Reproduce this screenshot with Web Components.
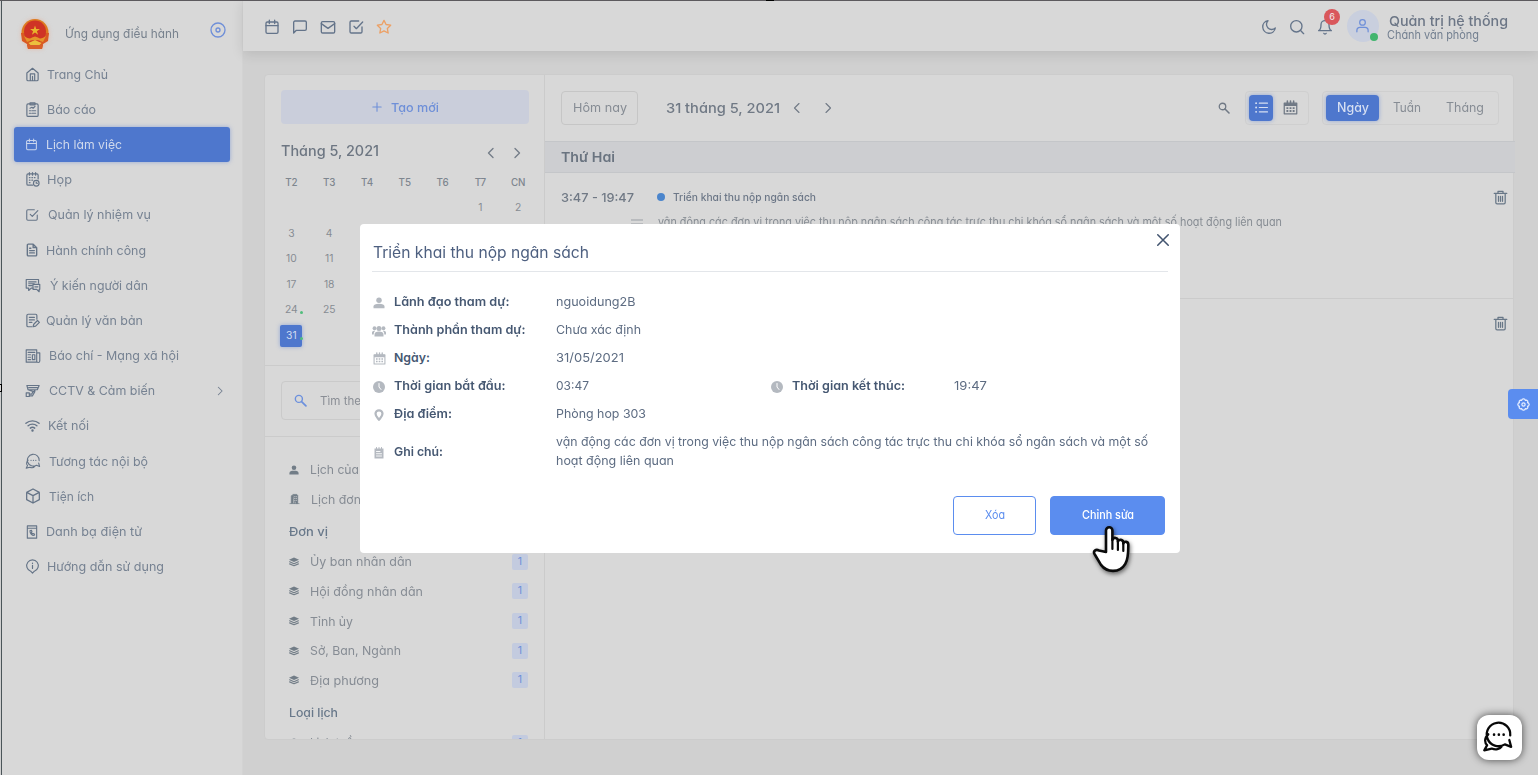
<!DOCTYPE html>
<html lang="vi">
<head>
<meta charset="utf-8">
<title>Lịch làm việc</title>
<style>
  html, body { margin: 0; height: 100%; overflow: hidden; }
  body { font-family: Inter, "Noto Sans", sans-serif; font-feature-settings: "cv11"; font-size: 13px; line-height: 1; color: #7b8592; background: #d0d0d0; }
  app-shell { height: 775px; }
</style>
</head>
<body>
<app-shell></app-shell>
<script>
const ICONS = {
  calendar: ['0 0 24 24', '<rect x="3" y="4.5" width="18" height="17" rx="2"/><path d="M3 10h18M8 1.8v5M16 1.8v5"/>'],
  chat: ['0 0 24 24', '<path d="M2.500 21V5a2 2 0 0 1 2-2h15a2 2 0 0 1 2 2v10a2 2 0 0 1-2 2h-13z"/>'],
  mail: ['0 0 24 24', '<rect x="2" y="4" width="20" height="17" rx="2"/><path d="M2 7l10 7 10-7"/>'],
  check: ['0 0 24 24', '<path d="M9 11l3.500 3.500L22 4.500"/><path d="M21 12v7a2 2 0 0 1-2 2H5a2 2 0 0 1-2-2V5a2 2 0 0 1 2-2h11"/>'],
  star: ['0 0 24 24', '<path d="M12 2l3.100 6.300 6.900 1-5 4.900 1.200 6.800L12 17.800 5.800 21 7 14.200 2 9.300l6.900-1z"/>'],
  moon: ['0 0 24 24', '<path d="M21.500 13.500A9.500 9.500 0 1 1 10.500 2.500a7.500 7.500 0 0 0 11 11z"/>'],
  search: ['0 0 24 24', '<circle cx="11" cy="11" r="8.500"/><path d="M22 22l-5-5"/>'],
  find: ['0 0 24 24', '<circle cx="9" cy="9" r="6.500" stroke-width="2.600"/><path d="M22 22l-8-8" stroke-width="3.200"/>'],
  bell: ['0 0 24 24', '<path d="M18 8.500a6 6 0 0 0-12 0c0 7-3.500 9-3.500 9h19S18 15.500 18 8.500M13.800 21.500a2 2 0 0 1-3.600 0"/>'],
  user: ['0 0 24 24', '<circle cx="12" cy="7" r="4.500"/><path d="M3 22v-2a5 5 0 0 1 5-5h8a5 5 0 0 1 5 5v2"/>'],
  left: ['0 0 24 24', '<path d="M16 3l-9 9 9 9"/>'],
  right: ['0 0 24 24', '<path d="M8 3l9 9-9 9"/>'],
  plus: ['0 0 24 24', '<path d="M12 2v20M2 12h20"/>'],
  close: ['0 0 24 24', '<path d="M3 3l18 18M21 3L3 21"/>'],
  target: ['0 0 24 24', '<circle cx="12" cy="12" r="10.500"/><circle cx="12" cy="12" r="3"/>'],
  home: ['0 0 24 24', '<path d="M3 9.500L12 2l9 7.500V20a2 2 0 0 1-2 2H5a2 2 0 0 1-2-2zM8.500 22V11h7v11M12 22v-7"/>'],
  report: ['0 0 24 24', '<rect x="3" y="3" width="18" height="20" rx="2"/><path d="M8 1.500h8v3H8zM8 10l3-1.500 2 1.500 3-3M7 14h2M11 14h6M7 18h2M11 18h6"/>'],
  meeting: ['0 0 24 24', '<path d="M12 21H5a2 2 0 0 1-2-2V5a2 2 0 0 1 2-2h14a2 2 0 0 1 2 2v6M7 1v4M12 1v4M17 1v4M7 9h1M11 9h1M15 9h1M7 13h1M11 13h1M7 17h1"/><circle cx="18" cy="18" r="4.500"/><path d="M18 16v2h2"/>'],
  file: ['0 0 24 24', '<path d="M4 3.500A1.500 1.500 0 0 1 5.500 2H14l6 6v12.500a1.500 1.500 0 0 1-1.500 1.500h-13A1.500 1.500 0 0 1 4 20.500zM14 2v6h6M8 9h2M8 13h8M8 17h8" stroke-width="2.400"/>'],
  comments: ['0 0 26 24', '<path d="M22 9V3H2v14h4v4l4-4h3M6 7h12M6 10h9M6 13h6"/><path d="M13 11h11v8h-1v4l-4-4h-6zM16 15h5"/>'],
  edit: ['0 0 24 24', '<path d="M11 22H5a2 2 0 0 1-2-2V4a2 2 0 0 1 2-2h12a2 2 0 0 1 2 2v6M7 7h8M7 11h8M7 15h4"/><path d="M13 22l1-4 6-6 3 3-6 6z"/>'],
  news: ['0 0 26 24', '<path d="M2 2h17v20H2zM19 7h5v13a2 2 0 0 1-5 0M5 6h11M5 10h4M5 14h4M5 18h4M12 10h4v8h-4z"/>'],
  cctv: ['0 0 26 24', '<path d="M3 3h20l-3 7H5zM6 6.500h14M5 10l9 3 3-3M13 13l-2 4H7M2 15h5v6H2zM7 20h5l4-7"/>'],
  wifi: ['0 0 24 24', '<path d="M1.500 8.500a16 16 0 0 1 21 0M5 12.500a10.500 10.500 0 0 1 14 0M8.500 16.200a5.500 5.500 0 0 1 7 0" stroke-width="2.300"/><circle cx="12" cy="20" r="1" fill="currentColor"/>'],
  talk: ['0 0 28 28', '<path d="M24.700 13.500A10.300 10.300 0 1 0 20 21.300l5.500 2.200-1.600-6M5.500 12.500C1.500 16 2.500 20.500 4.500 22L2 26.500l6.500-1.500c3.500 1.500 7 .500 8.500-1.500"/><path d="M10.500 12.800h.1M14.700 12.800h.1M18.900 12.800h.1" stroke-width="2.200"/>'],
  cube: ['0 0 24 24', '<path d="M12 1.500l9.500 5v11l-9.500 5-9.500-5v-11zM2.500 6.500l9.500 5 9.500-5M12 11.500v11"/>'],
  phonebook: ['0 0 24 24', '<path d="M4 1.500h16v21H4zM4 5.500h16M8.500 10c0 4 3 8 7 8l1-2-2.500-1.500-1 .7c-1-.7-1.800-1.800-2-3l1-.8-1-2.400z"/>'],
  guide: ['0 0 24 24', '<path d="M12 22.500l-3-3a9.300 9.300 0 1 1 6 0zM12 10v5M12 6.500v.5"/>'],
  trash: ['0 0 24 24', '<path d="M2 5.500h20M8 5V2h8v3M4.500 5.500v14.500A2 2 0 0 0 6.500 22h11a2 2 0 0 0 2-2V5.500M8.800 10v8M12 10v8M15.200 10v8"/>'],
  list: ['0 0 24 24', '<path d="M8 4h15M8 12h15M8 20h15" stroke-width="2.200"/><path d="M2 4h.1M2 12h.1M2 20h.1" stroke-width="3.500"/>'],
  month: ['0 0 24 24', '<path d="M2 5h20v17H2zM2 8.500h20" stroke-width="2"/><path d="M3 6.500h18" stroke-width="3"/><path d="M7 1.500v4M12 1.500v4M17 1.500v4" stroke-width="2.500"/><path d="M5.500 13h3M10.500 13h3M15.500 13h3M5.500 17.500h3M10.500 17.500h3M15.500 17.500h3" stroke-width="3" stroke-linecap="butt"/>'],
  gear: ['0 0 24 24', '<path d="M9.500 2.500l2.500-1 2.500 1 1 2 2.500-.5 2 2-.5 2.500 2 1 1 2.500-1 2.500-2 1 .5 2.500-2 2-2.500-.5-1 2-2.500 1-2.500-1-1-2-2.500.5-2-2 .5-2.500-2-1-1-2.500 1-2.500 2-1L4 6l2-2 2.500.5z"/><circle cx="12" cy="12" r="3"/>'],
  grip: ['0 0 24 24', '<path d="M0 8h24M0 16h24" stroke-width="2"/>'],
  person: ['0 0 24 24', '<g fill="currentColor" stroke="none"><circle cx="12" cy="6.500" r="5.500"/><path d="M1 22.500V19c0-4 4-5.500 11-5.500S23 15 23 19v3.500z"/></g>'],
  people: ['0 0 28 24', '<g fill="currentColor" stroke="none"><circle cx="14" cy="7" r="5"/><circle cx="5" cy="6.500" r="3.800"/><circle cx="23" cy="6.500" r="3.800"/><path d="M5 23v-4c0-4 3-6 9-6s9 2 9 6v4zM0 19v-4c0-2.500 2-3.500 6.500-3.500-2 2-3 4-3 7.500zM28 19v-4c0-2.500-2-3.500-6.500-3.500 2 2 3 4 3 7.500z"/></g>'],
  clock: ['0 0 24 24', '<circle cx="12" cy="12" r="12" fill="currentColor" stroke="none"/><path d="M12 5v7l4 5" stroke="#fff" stroke-width="2"/>'],
  pin: ['0 0 24 24', '<path d="M12 21.500c-2-3-7-7-7-12a7 7 0 0 1 14 0c0 5-5 9-7 12z" stroke-width="4.500"/>'],
  note: ['0 0 24 24', '<path d="M3 3h18v20H3z" fill="currentColor" stroke="none"/><path d="M7 1v3M12 1v3M17 1v3" stroke-width="2"/><path d="M7 9h7M7 13.500h10M7 18h10" stroke="#fff" stroke-width="1.800"/>'],
  building: ['0 0 24 24', '<path d="M5 22V5l4-2v19M9 2h8l2 2v18h-4v-4h-3v4M2 22h20" fill="currentColor" stroke-width="1.500"/><path d="M12 7h1M15.500 7h1M12 11h1M15.500 11h1M12 15h1M15.500 15h1" stroke="#d8d8d8" stroke-width="1.500"/>'],
  layers: ['0 0 24 24', '<path d="M12 1L0 6.500l12 5.500 12-5.500z" fill="currentColor" stroke="none"/><path d="M1.500 11.500l10.500 4.500 10.500-4.500M1.500 16.500l10.500 4.500 10.500-4.500" stroke-width="2.800"/>'],
  hand: ['0 0 38 48', '<path d="M14 27V5.500a3.200 3.200 0 0 1 6.400 0V15a2.800 2.800 0 0 1 5.500.8v.8a2.800 2.800 0 0 1 5.400.8v1a2.600 2.600 0 0 1 5 1c0 8 .2 14-3 19.500-2.300 4-5.800 7-12.300 7-6 0-9-2-12-6L2.800 29.500C.500 26 4 24 7 25.500z" fill="#fff" stroke="#0b0b0b" stroke-width="2.600"/><path d="M20.400 14v10M25.900 16v9M31.300 18v8" stroke="#0b0b0b" stroke-width="2.200"/>'],
  emblem: ['0 0 30 30', '<g stroke="none"><circle cx="15" cy="13.500" r="13.500" fill="#dd7a1f"/><path d="M1 14l28 0-1 8-5 3-1 5H8l-1-5-5-3z" fill="#d95a22"/><circle cx="15" cy="12.500" r="11" fill="#cf3325"/><path d="M15 6.500l1.200 3.500h3.700l-3 2.200 1.200 3.500-3.100-2.200-3.100 2.200 1.200-3.500-3-2.200h3.700z" fill="#e8b52c"/><path d="M4 17q5 4 8 1.500l3-1 3 1q3 2.500 8-1.500l-3 6q-8-4-16 0z" fill="#e4952a"/><path d="M8.500 24l6.500-3 6.500 3-2 2h-9z" fill="#ecc03d"/><path d="M7 26h16l-1 4H8z" fill="#d9602a"/></g>'],
};

class UiIcon extends HTMLElement {
  connectedCallback() {
    if (this.shadowRoot) return;
    const [box, body] = ICONS[this.getAttribute('name')];
    const w = this.getAttribute('size') || 16, h = this.getAttribute('h') || w;
    this.attachShadow({ mode: 'open' }).innerHTML = `
      <style>:host{display:inline-block;flex:none;width:${w}px;height:${h}px}svg{display:block;width:100%;height:100%}</style>
      <svg viewBox="${box}" fill="none" stroke="currentColor" stroke-width="${this.getAttribute('sw') || 2}" stroke-linecap="round" stroke-linejoin="round">${body}</svg>`;
  }
}
customElements.define('ui-icon', UiIcon);

class FitText extends HTMLElement {
  connectedCallback() {
    if (this.shadowRoot) return;
    this.attachShadow({ mode: 'open' }).innerHTML = `
      <style>:host{display:inline-block;flex:none;white-space:nowrap;line-height:20px}span{display:inline-block;font-size:.95em;transform-origin:0 50%}</style><span><slot></slot></span>`;
    const w = +this.getAttribute('w');
    if (!w) return;
    const span = this.shadowRoot.querySelector('span');
    span.style.transform = `scaleX(${(w / span.getBoundingClientRect().width).toFixed(4)})`;
    this.style.width = w + 'px';
  }
}
customElements.define('fit-text', FitText);

const define = (name, html) => customElements.define(name, class extends HTMLElement {
  connectedCallback() {
    if (!this.shadowRoot) this.attachShadow({ mode: 'open' }).innerHTML = typeof html === 'function' ? html(this) : html;
  }
});

const NAV = [
  ['home', 'Trang Chủ', 22, 61, 15], ['report', 'Báo cáo', 22, 49, 15], ['calendar', 'Lịch làm việc', 21, 76, 13],
  ['meeting', 'Họp', 22, 25, 15], ['check', 'Quản lý nhiệm vụ', 23, 103, 14], ['file', 'Hành chính công', 21, 100, 14],
  ['comments', 'Ý kiến người dân', 25, 98, 16], ['edit', 'Quản lý văn bản', 21, 97, 15], ['news', 'Báo chí - Mạng xã hội', 24, 130, 16],
  ['cctv', 'CCTV & Cảm biến', 24, 106, 16], ['wifi', 'Kết nối', 23, 41, 15], ['talk', 'Tương tác nội bộ', 24, 99, 16],
  ['cube', 'Tiện ích', 24, 45, 16], ['phonebook', 'Danh bạ điện tử', 21, 96, 14], ['guide', 'Hướng dẫn sử dụng', 22, 117, 15]];

define('side-nav', () => `<style>
  :host{display:block;width:240px;flex:none;background:#d8d8d8;margin-left:1px;border-left:1px solid #4b5559;color:#768292;box-sizing:content-box}
  header{display:flex;align-items:center;height:56.500px;padding:0 16px 0 18px}
  header fit-text{font-size:13px;margin:11px 0 0 15px;color:#77818d}
  header ui-icon[name=emblem]{margin-top:12px;filter:drop-shadow(0 0 2px #e8a08088)}
  header ui-icon[name=target]{color:#6f8fd8;margin:4px 0 0 auto}
  .row{display:flex;align-items:center;height:35.200px;margin:0 12px 0 12px;padding-left:11px;border-radius:3px;box-sizing:border-box;font-size:13px}
  .row>span{display:flex;flex:none;color:#657487}
  .row>ui-icon{margin:0 5px 0 auto}
  .on{background:#4e77cd;color:#d0d9ec;box-shadow:0 0 4px #7391d6aa}
  .on>span{color:#cad5ee}
</style>
<header><ui-icon name="emblem" size="30"></ui-icon><fit-text w="114">Ứng dụng điều hành</fit-text><ui-icon name="target" size="16"></ui-icon></header>
<nav>${NAV.map(([i, t, g, w, s]) => `<div class="row${i === 'calendar' ? ' on' : ''}"><span style="width:${g}px"><ui-icon name="${i}" size="${s}" sw="1.900"></ui-icon></span><fit-text w="${w}">${t}</fit-text>${i === 'cctv' ? '<ui-icon name="right" size="10" sw="2.500"></ui-icon>' : ''}</div>`).join('')}</nav>`);

define('top-bar', `<style>
  :host{display:flex;align-items:center;height:51px;flex:none;background:#d8d8d8;color:#64748a;padding:0 30px 0 21px;box-shadow:0 3px 12px #0000001c;position:relative;box-sizing:border-box}
  .g{display:flex;gap:12px;margin-top:2px}.g.r{margin-left:auto}
  [name=star]{color:#eca065}
  .b{position:relative;display:flex}
  .b i{position:absolute;left:7px;top:-9.500px;width:16px;height:16px;border-radius:50%;background:#d9575b;color:#eedddd;font:500 9px/16px Inter,sans-serif;text-align:center}
  .av{position:relative;display:flex;align-items:center;justify-content:center;width:32px;height:32px;border-radius:50%;background:#c9cfde;color:#6e8fd8;margin:0 8.500px 0 13.500px}
  .av i{position:absolute;right:.5px;bottom:.5px;width:8px;height:8px;border-radius:50%;background:#42b56e}
  .n{display:flex;flex-direction:column;margin-top:4px}
  .n fit-text{line-height:14px}
  .n fit-text:first-child{font-size:14.500px;font-weight:500;margin-left:2px;color:#6c7686}
  .n fit-text:last-child{font-size:12px;color:#727f90}
</style>
<div class="g"><ui-icon name="calendar"></ui-icon><ui-icon name="chat"></ui-icon><ui-icon name="mail"></ui-icon><ui-icon name="check"></ui-icon><ui-icon name="star"></ui-icon></div>
<div class="g r"><ui-icon name="moon"></ui-icon><ui-icon name="search"></ui-icon><div class="b"><ui-icon name="bell"></ui-icon><i>6</i></div></div>
<div class="av"><ui-icon name="user" size="15"></ui-icon><i></i></div>
<div class="n"><fit-text w="119">Quản trị hệ thống</fit-text><fit-text w="92">Chánh văn phòng</fit-text></div>`);

/* Each cell: date, row, column. */
const DATES = [[1, 1, 6], [2, 1, 7], [3, 2, 1], [4, 2, 2], [10, 3, 1], [11, 3, 2], [17, 4, 1], [18, 4, 2], [24, 5, 1], [25, 5, 2], [31, 6, 1]];
define('mini-calendar', () => `<style>
  :host{display:block;height:291px;box-sizing:border-box;padding:15px 16px 0;border-bottom:1px solid #cbcbcb}
  button{display:flex;width:248px;height:34px;border:0;border-radius:4px;background:#cacedb;color:#6e8fd8;align-items:center;justify-content:center;gap:9px;font:500 13px Inter,sans-serif;font-feature-settings:inherit;padding:0}
  .t{display:flex;align-items:center;height:20px;margin-top:17px;color:#6d7682;font-size:15px;font-weight:500}
  .t ui-icon{margin-top:3px;color:#747d88}.t ui-icon:nth-child(2){margin-left:auto;margin-right:14px}.t ui-icon:last-child{margin-right:5px}
  .w,.d{display:grid;grid-template-columns:repeat(7,37.800px);margin-left:-8.500px;text-align:center;justify-items:center}
  .w{margin-top:11.500px;font-size:9.800px;line-height:20px;font-weight:500;color:#7e868f}
  .d{grid-template-rows:repeat(6,25.600px);font-size:10.300px;line-height:21px;margin-top:3.500px;color:#878c93}
  .d>*{width:22px;height:22px;margin-top:1px;position:relative}
  .on{background:#4e77cd;color:#d3dcf0;border-radius:2px;box-shadow:0 0 4px #7391d6aa}
  .dot::after{content:"";position:absolute;right:-1px;bottom:7px;width:3px;height:3px;border-radius:50%;background:#51bd7c}
</style>
<button><ui-icon name="plus" size="10" sw="2.600"></ui-icon><fit-text w="48">Tạo mới</fit-text></button>
<div class="t"><fit-text w="98">Tháng 5, 2021</fit-text><ui-icon name="left" size="12" sw="2.700"></ui-icon><ui-icon name="right" size="12" sw="2.700"></ui-icon></div>
<div class="w">${['T2', 'T3', 'T4', 'T5', 'T6', 'T7', 'CN'].map(x => `<span>${x}</span>`).join('')}</div>
<div class="d">${DATES.map(([x, r, c]) => `<span style="grid-area:${r}/${c}" class="${x === 31 ? 'on dot' : x === 24 ? 'dot' : ''}">${x}</span>`).join('')}</div>`);

const UNITS = [['Ủy ban nhân dân', 102], ['Hội đồng nhân dân', 113], ['Tỉnh ủy', 43], ['Sở, Ban, Ngành', 91], ['Địa phương', 69]];
define('calendar-filters', () => `<style>
  :host{display:block;flex:1;overflow:hidden;color:#868c94;font-size:13px}
  .s{height:71px;box-sizing:border-box;padding:15px 16px;border-bottom:1px solid #cbcbcb}
  .s div{display:flex;align-items:center;width:248px;height:39px;box-sizing:border-box;border:1px solid #cacaca;border-radius:4px;padding-left:12px;gap:13px;font-size:12px;color:#8a8e95}
  .s ui-icon{color:#6c90dd}
  .r{display:flex;align-items:center;height:29.600px;padding:0 16px 0 24px}
  .r ui-icon{color:#727d87}.r fit-text{margin-left:11px}
  .r b{margin-left:auto;width:16px;height:16px;background:#c3cbdf;color:#6e8fd8;font-weight:400;font-size:10.500px;line-height:16px;text-align:center;border-radius:2px}
  h4{margin:0;padding:3px 24px 0;height:33px;font-size:12.500px;font-weight:500;color:#68788a;display:flex;align-items:center;box-sizing:border-box}
</style>
<div class="s"><div><ui-icon name="find" size="13"></ui-icon><fit-text w="48">Tìm theo</fit-text></div></div>
<div style="height:17.900px"></div>
<div class="r"><ui-icon name="person" size="10"></ui-icon><fit-text w="49">Lịch của</fit-text></div>
<div class="r"><ui-icon name="building" size="11" h="12"></ui-icon><fit-text w="50">Lịch đơn</fit-text></div>
<h4><fit-text w="39">Đơn vị</fit-text></h4>
${UNITS.map(([t, w]) => `<div class="r"><ui-icon name="layers" size="10"></ui-icon><fit-text w="${w}">${t}</fit-text><b>1</b></div>`).join('')}
<h4><fit-text w="49">Loại lịch</fit-text></h4>
<div class="r"><ui-icon name="person" size="10"></ui-icon><fit-text w="50">Lịch tuần</fit-text><b>1</b></div>`);

define('day-agenda', `<style>
  :host{display:block;flex:1;min-width:0;color:#707985}
  .bar{display:flex;align-items:center;height:66px;padding:0 14px 1px 16px;box-sizing:border-box}
  .bar>*{flex:none}
  .today{width:77px;height:34px;border:1px solid #c6c6c6;border-radius:4px;box-sizing:border-box;display:flex;align-items:center;justify-content:center;color:#868c94;font-size:13px}
  .date{font-size:14.500px;font-weight:500;margin:0 11px 0 28px}
  .seg{display:flex;align-items:center;height:34px;border:1px solid #cfcfcf;box-sizing:border-box;border-radius:4px;padding:0 3px}
  .seg span{display:flex;align-items:center;justify-content:center;height:26px}
  .seg .on{background:#4e77cd;color:#d6dff2;border-radius:4px;box-shadow:0 0 4px #7391d6aa}
  .band{display:flex;align-items:center;height:32px;box-sizing:border-box;border:solid #c4c6c9;border-width:1px 0;background:#cdced1;padding-left:16px;margin-right:-2px;font-size:14px;font-weight:600;color:#6a7480}
  .ev{height:126px;box-sizing:border-box;border-bottom:1px solid #cbcbcb;padding:14.500px 5.500px 0 16px}
  .ev:last-child{border:0;padding-top:14px}
  .l{display:flex;align-items:center;height:20px}
  .l i{width:8px;height:8px;border-radius:50%;background:#4b85cc;margin:0 8px 2px 23px}
  .time{font-size:13px;font-weight:500}.ti{font-size:11.500px;font-weight:500;color:#6c7787;margin-bottom:2px}
  .l ui-icon[name=trash]{margin-left:auto;color:#687787}
  .d{font-size:12px;color:#868c93;padding-left:70px;margin-top:4.500px}.d fit-text{margin-left:15px}
  .d ui-icon{color:#9a9fa5}
</style>
<div class="bar"><div class="today"><fit-text w="54">Hôm nay</fit-text></div><fit-text class="date" w="114">31 tháng 5, 2021</fit-text>
<ui-icon name="left" size="12" sw="2.200"></ui-icon><ui-icon name="right" size="12" sw="2.200" style="margin-left:19px"></ui-icon>
<ui-icon name="find" size="12" style="margin-left:auto;margin-right:15px"></ui-icon>
<div class="seg" style="width:64px;margin-right:13px"><span class="on" style="width:26px"><ui-icon name="list" size="13"></ui-icon></span><span style="width:34px;padding-left:3px;box-sizing:border-box"><ui-icon name="month" size="15"></ui-icon></span></div>
<div class="seg" style="width:177px;font-size:13.500px;color:#868c94"><span class="on" style="width:53px;font-weight:500"><fit-text w="32">Ngày</fit-text></span><span style="width:56px"><fit-text w="28">Tuần</fit-text></span><span style="width:60px"><fit-text w="38">Tháng</fit-text></span></div></div>
<div class="band"><fit-text w="54">Thứ Hai</fit-text></div>
<div class="ev"><div class="l"><fit-text class="time" w="73">3:47 - 19:47</fit-text><i></i><fit-text class="ti" w="143">Triển khai thu nộp ngân sách</fit-text><ui-icon name="trash" size="15"></ui-icon></div>
<div class="l d"><ui-icon name="grip" size="12"></ui-icon><fit-text w="624">vận động các đơn vị trong việc thu nộp ngân sách công tác trực thu chi khóa sổ ngân sách và một số hoạt động liên quan</fit-text></div></div>
<div class="ev"><div class="l"><ui-icon name="trash" size="15"></ui-icon></div></div>`);

define('detail-row', el => `<style>
  :host{display:flex;align-items:center;height:28px;font-size:13px;color:#5d6c82}
  .i{width:14px;display:flex;justify-content:center;margin-right:8px;color:#b4b9c0}.i ui-icon{margin-top:3px}
  .l{font-weight:600;color:#465872;width:162px;flex:none}
</style><span class="i"><ui-icon name="${el.getAttribute('icon')}" size="${el.getAttribute('s') || 12}"></ui-icon></span><span class="l"><fit-text w="${el.getAttribute('lw')}">${el.getAttribute('label')}</fit-text></span><slot></slot>`);

define('event-dialog', `<style>
  :host{position:absolute;left:360px;top:224px;width:820px;height:329px;box-sizing:border-box;background:#fff;border-radius:4px;padding:0 12px}
  h3{margin:0 0 15px;height:48px;box-sizing:border-box;padding-top:18px;border-bottom:1px solid #e3e6ea;font-size:16px;font-weight:400;color:#4e6080}
  h3 fit-text{margin-left:.5px}
  .x{position:absolute;right:10px;top:9px;color:#42546f}
  .two{display:grid;grid-template-columns:398px 1fr}
  detail-row.n{height:49px}
  .n div{font-size:13px;display:flex;flex-direction:column;margin-top:-1px}.n fit-text{line-height:19px}
  footer{display:flex;justify-content:flex-end;gap:14px;margin-top:20px;padding-right:3px}
  button{height:38.500px;border:1px solid #5b8def;border-radius:4px;background:#fff;color:#5b8def;font:400 12px Inter,sans-serif;font-feature-settings:inherit;padding:0;box-sizing:border-box}
  .p{background:#5b8def;color:#fff;font-weight:500}
</style>
<h3><fit-text w="216">Triển khai thu nộp ngân sách</fit-text></h3><ui-icon class="x" name="close" size="14" sw="2.600"></ui-icon>
<detail-row icon="person" label="Lãnh đạo tham dự:" lw="115.500"><fit-text w="79.500">nguoidung2B</fit-text></detail-row>
<detail-row icon="people" s="14" label="Thành phần tham dự:" lw="131.500"><fit-text w="85">Chưa xác định</fit-text></detail-row>
<detail-row icon="month" s="13" label="Ngày:" lw="36"><fit-text w="68">31/05/2021</fit-text></detail-row>
<div class="two"><detail-row icon="clock" label="Thời gian bắt đầu:" lw="111.500"><fit-text w="33">03:47</fit-text></detail-row><detail-row icon="clock" label="Thời gian kết thúc:" lw="113"><fit-text w="33">19:47</fit-text></detail-row></div>
<detail-row icon="pin" s="12" label="Địa điểm:" lw="58"><fit-text w="90">Phòng hop 303</fit-text></detail-row>
<detail-row class="n" icon="note" label="Ghi chú:" lw="49"><div><fit-text w="592">vận động các đơn vị trong việc thu nộp ngân sách công tác trực thu chi khóa sổ ngân sách và một số</fit-text><fit-text w="118">hoạt động liên quan</fit-text></div></detail-row>
<footer><button style="width:83px"><fit-text w="20">Xóa</fit-text></button><button class="p" style="width:115px"><fit-text w="52">Chỉnh sửa</fit-text></button></footer>`);

define('app-shell', `<style>
  :host{display:flex;position:relative;width:1538px;overflow:hidden;background:#d0d0d0}
  :host::before{content:"";position:absolute;z-index:3;left:0;right:0;top:0;height:1px;background:#5c5a5e}
  main{flex:1;display:flex;flex-direction:column;min-width:0;border-left:1px solid #d3d3d3}
  .card{display:flex;width:1250px;height:666px;box-sizing:border-box;margin:23px 0 0 21px;background:#d8d8d8;border:1px solid #cccccc;border-radius:4px}
  .c{width:280px;flex:none;box-sizing:border-box;border-right:1px solid #cbcbcb;display:flex;flex-direction:column;overflow:hidden}
  .gear{position:absolute;left:1508px;top:389px;width:30px;height:30px;border-radius:4px 0 0 4px;background:#5b8def;color:#e6eeff;display:flex;align-items:center;justify-content:center}
  .chat{position:absolute;left:1477px;top:715px;width:45px;height:45px;border-radius:12px;background:#fff;color:#080808;display:flex;align-items:center;justify-content:center;box-shadow:0 0 8px #000a}
  .chat ui-icon{margin:-3px 3px 0 0}
  .hand{position:absolute;left:1092px;top:525px;filter:drop-shadow(1px 2px 2px #0008)}
  .m{position:absolute;background:#d8d8d8;border:1px solid #000;box-sizing:border-box;z-index:4}
</style>
<side-nav></side-nav>
<main><top-bar></top-bar><div class="card"><div class="c"><mini-calendar></mini-calendar><calendar-filters></calendar-filters></div><day-agenda></day-agenda></div></main>
<event-dialog></event-dialog>
<div class="gear"><ui-icon name="gear" size="13" sw="2.200"></ui-icon></div>
<div class="chat"><ui-icon name="talk" size="32" sw="2"></ui-icon></div>
<ui-icon class="hand" name="hand" size="38" h="48"></ui-icon>
<div class="m" style="left:-3px;top:384px;width:5px;height:8px"></div><div class="m" style="left:766px;top:-3px;width:8px;height:4px"></div>`);
</script>
</body>
</html>
